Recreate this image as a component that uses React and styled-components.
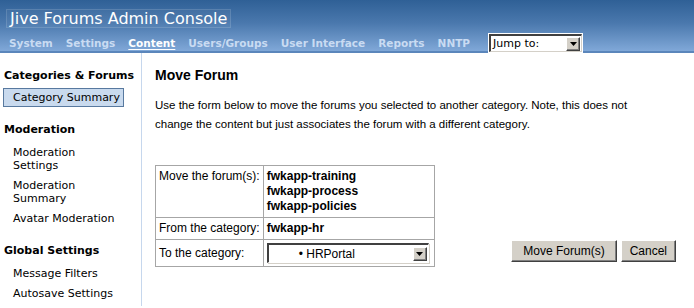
import styled, { createGlobalStyle } from 'styled-components';

const GlobalStyle = createGlobalStyle`
	body{
		margin: 0;
		background: #fff;
		font-family: "DejaVu Sans", Verdana, sans-serif;
	}
`

const navItems = ["System", "Settings", "Content", "Users/Groups", "User Interface", "Reports", "NNTP"];
const forums = ["fwkapp-training", "fwkapp-process", "fwkapp-policies"];

const Arrow = () => (
	<ArrowButton>
		<svg width="7" height="4" viewBox="0 0 7 4"><path d="M0 0h7L3.5 4z" fill="#000" /></svg>
	</ArrowButton>
)

const App = () => {
	return(
		<Page>
			<GlobalStyle />
			<Header>
				<Title>Jive Forums Admin Console</Title>
				<Nav>
					{navItems.map((item) => (
						<NavLink key={item} $active={item === "Content"}>{item}</NavLink>
					))}
					<Select $width={93} $height={18}>
						<SelectText $font="11px 'DejaVu Sans', Verdana, sans-serif">Jump to:</SelectText>
						<Arrow />
					</Select>
				</Nav>
			</Header>
			<Body>
				<Sidebar>
					<SectionTitle>Categories &amp; Forums</SectionTitle>
					<ActiveItem>Category Summary</ActiveItem>
					<SectionTitle>Moderation</SectionTitle>
					<Item>Moderation Settings</Item>
					<Item>Moderation Summary</Item>
					<Item>Avatar Moderation</Item>
					<SectionTitle>Global Settings</SectionTitle>
					<Item>Message Filters</Item>
					<Item>Autosave Settings</Item>
				</Sidebar>
				<Main>
					<h1>Move Forum</h1>
					<p>Use the form below to move the forums you selected to another category. Note, this does not change the content but just associates the forum with a different category.</p>
					<FormRow>
						<FormTable>
							<tbody>
								<tr>
									<Label>Move the forum(s):</Label>
									<Value>
										{forums.map((f) => (
											<div key={f}>{f}</div>
										))}
									</Value>
								</tr>
								<tr>
									<Label>From the category:</Label>
									<Value>fwkapp-hr</Value>
								</tr>
								<tr>
									<Label $middle>To the category:</Label>
									<Value>
										<Select $width={162} $height={20}>
											<SelectText $font="12px 'Liberation Sans', Arial, sans-serif" $indent={30}>• HRPortal</SelectText>
											<Arrow />
										</Select>
									</Value>
								</tr>
							</tbody>
						</FormTable>
						<Buttons>
							<Button $pad={11}>Move Forum(s)</Button>
							<Button $pad={8}>Cancel</Button>
						</Buttons>
					</FormRow>
				</Main>
			</Body>
		</Page>
	)
}

const Page = styled.div`
	width: 694px;
	height: 308px;
	overflow: hidden;
`

const Header = styled.div`
	height: 53px;
	background: linear-gradient(180deg, #2f6096 0%, #4a78ad 45%, #80a8d8 100%);
	border-bottom: 2px solid #5b86bb;
	box-sizing: border-box;
	padding: 9px 0 0 6px;
`

const Title = styled.div`
	display: inline-block;
	font-size: 16px;
	line-height: 17px;
	color: #fff;
	padding: 0 3px;
	border: 1px solid rgba(255, 255, 255, 0.13);
	background: rgba(255, 255, 255, 0.04);
`

const Nav = styled.div`
	display: flex;
	align-items: center;
	gap: 13px;
	margin-top: 6px;
	padding-left: 3px;
`

const NavLink = styled.span`
	font-size: 10.5px;
	font-weight: bold;
	color: ${(p) => p.$active ? '#fff' : '#c9dbf2'};
	text-decoration: ${(p) => p.$active ? 'underline' : 'none'};
	text-underline-offset: 2px;
`

const Select = styled.div`
	display: flex;
	align-items: center;
	width: ${(p) => p.$width}px;
	height: ${(p) => p.$height}px;
	box-sizing: border-box;
	background: #fff;
	border-top: 2px solid #404040;
	border-left: 2px solid #404040;
	border-right: 1px solid #d4d0c8;
	border-bottom: 1px solid #d4d0c8;
	outline: 1px solid #fff;
	margin-left: 6px;
	padding-right: 1px;

	td &{
		margin-left: 0;
		outline: none;
		border-top: 2px solid #404040;
		border-left: 2px solid #404040;
		border-right: 1px solid #fff;
		border-bottom: 1px solid #fff;
		box-shadow: 1px 1px 0 #d4d0c8;
	}
`

const SelectText = styled.span`
	flex: 1;
	font: ${(p) => p.$font};
	color: #000;
	padding-left: ${(p) => p.$indent || 2}px;
	white-space: nowrap;
`

const ArrowButton = styled.span`
	display: flex;
	align-items: center;
	justify-content: center;
	width: 14px;
	height: 14px;
	box-sizing: border-box;
	background: #d4d0c8;
	border-top: 1px solid #fff;
	border-left: 1px solid #fff;
	border-right: 1px solid #404040;
	border-bottom: 1px solid #404040;
	box-shadow: inset -1px -1px 0 #808080;
`

const Body = styled.div`
	display: flex;
	height: 253px;
`

const Sidebar = styled.div`
	width: 142px;
	flex-shrink: 0;
	border-right: 1px solid #c6d7ed;
	padding-top: 16px;
	box-sizing: border-box;
	font-size: 11px;
	color: #000;
`

const SectionTitle = styled.div`
	font-weight: bold;
	line-height: 14px;
	padding-left: 4px;
	margin-bottom: 5px;
	margin-top: 16px;

	&:first-child{
		margin-top: 0;
	}
`

const Item = styled.div`
	line-height: 13px;
	padding: 4px 0 3px 13px;
	max-width: 104px;
`

const ActiveItem = styled.div`
	margin-left: 3px;
	width: 121px;
	height: 19px;
	box-sizing: border-box;
	line-height: 17px;
	padding-left: 9px;
	background: #c9daee;
	border: 1px solid #58799f;
`

const Main = styled.div`
	flex: 1;
	padding: 14px 18px 0 13px;
	font-family: "Liberation Sans", Arial, sans-serif;
	color: #000;

	h1{
		margin: 0;
		font-size: 14px;
		line-height: 17px;
		font-weight: bold;
	}

	p{
		margin: 12px 0 0;
		font-size: 11.5px;
		line-height: 19px;
		max-width: 490px;
	}
`

const FormRow = styled.div`
	display: flex;
	align-items: flex-end;
	justify-content: space-between;
	margin-top: 31px;
`

const FormTable = styled.table`
	border-collapse: collapse;
	border: 1px solid #a6a6a6;
	font-size: 12px;
	width: 280px;

	td{
		border: 1px solid #a6a6a6;
		padding: 3px 3px;
		line-height: 15px;
	}
`

const Label = styled.td`
	width: 100px;
	white-space: nowrap;
	vertical-align: ${(p) => p.$middle ? 'middle' : 'top'};
`

const Value = styled.td`
	font-weight: bold;
	vertical-align: top;
`

const Buttons = styled.div`
	display: flex;
	gap: 4px;
	margin-bottom: 5px;
`

const Button = styled.button`
	height: 22px;
	padding: 0 ${(p) => p.$pad}px;
	font: 12px "Liberation Sans", Arial, sans-serif;
	color: #000;
	background: #d4d0c8;
	border-top: 1px solid #fff;
	border-left: 1px solid #fff;
	border-right: 1px solid #404040;
	border-bottom: 1px solid #404040;
	box-shadow: inset -1px -1px 0 #808080;
	border-radius: 0;
`

export default App;
